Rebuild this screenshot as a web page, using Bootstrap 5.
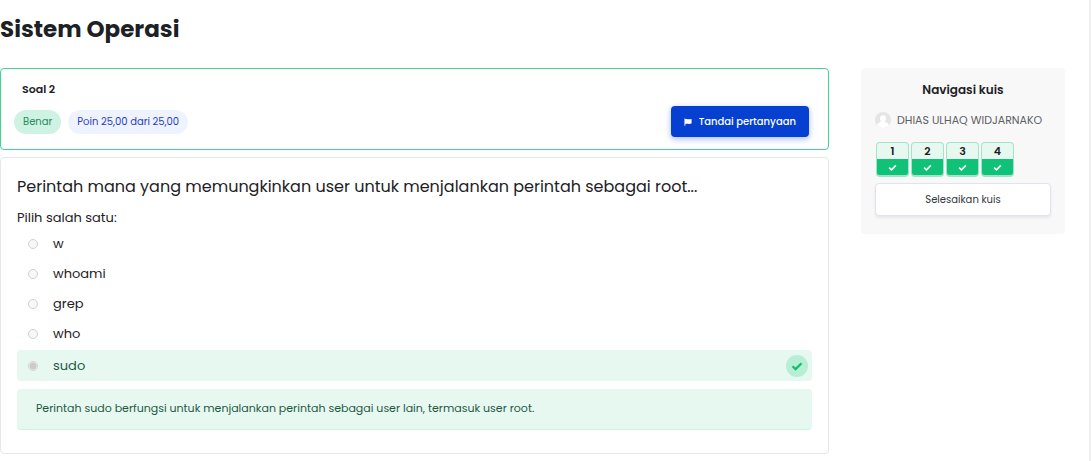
<!DOCTYPE html>
<html lang="id">
<head>
<meta charset="utf-8">
<meta name="viewport" content="width=device-width, initial-scale=1">
<title>Sistem Operasi</title>
<link href="https://cdn.jsdelivr.net/npm/bootstrap@5.3.0/dist/css/bootstrap.min.css" rel="stylesheet">
<style>
  body { font-family: Poppins, Inter, "Open Sans", sans-serif; font-size: 13px; line-height: 20px; color: #1d2125; }
  .page-wrap { min-height: 100vh; padding-right: 24px; border-right: 2px solid #f0f0f0; }
  .page-title { font-size: 23px; line-height: 30px; font-weight: 700; padding: 14px 0 24px; }
  .quiz-side { flex: 0 0 204px; background: #f8f8f8; border-radius: 4px; padding: 12px 14px 18px; }
  .info-box { border: 1px solid #3fd195; border-radius: 4px; padding: 10px 19px 12px 13px; min-height: 82px; }
  .info-box h2 { font-size: 11px; line-height: 20px; font-weight: 600; padding-left: 8px; }
  .pill-row { margin-top: 7px; }
  .pill-set { gap: 7px; }
  .pill { font-size: 10px; line-height: 24px; padding: 0 9px; border-radius: 12px; }
  .pill-ok { background: #cff3e3; color: #2b8a5c; }
  .pill-points { background: #eff3ff; color: #1f3fc4; }
  .btn-flag { gap: 7px; background: #0540d0; color: #fff; font-size: 10px; line-height: 15px; font-weight: 500; padding: 8px 13px; border-radius: 4px; box-shadow: 0 2px 6px rgba(5, 64, 208, .35); }
  .btn-flag:hover { background: #0436b0; color: #fff; }
  .question-box { border: 1px solid #e7e7e7; border-radius: 4px; padding: 16px 16px 23px; margin-top: 7px; }
  .question-text { font-size: 16px; line-height: 26px; }
  .prompt-line { margin: 8px 0 1px; }
  .choice { min-height: 30px; padding: 0 4px 0 11px; border-radius: 4px; }
  .choice input { appearance: none; width: 10px; height: 10px; margin: 0 15px 0 0; border: 1px solid #d2d2d2; border-radius: 50%; background: #f7f7f7; }
  .choice input:checked { background: radial-gradient(circle, #cacaca 0 3px, #f3f3f3 4px); }
  .choice-ok { background: #e7f8f0; color: #1d5944; min-height: 31px; margin-top: 1px; }
  .check-dot { width: 22px; height: 22px; border-radius: 50%; background: #b7eed5; color: #10bf74; }
  .feedback-box { background: #e7f8f0; color: #1d5944; border-bottom: 1px solid #d3f1e3; border-radius: 4px; font-size: 11px; line-height: 20px; padding: 9px 19px 11px; margin-top: 8px; }
  .side-title { font-size: 12px; line-height: 20px; font-weight: 600; }
  .user-row { gap: 6px; margin: 10px 0 12px; }
  .user-name { font-size: 11px; line-height: 20px; color: #5c6064; }
  .q-list { gap: 2px; padding-left: 1px; margin-bottom: 6px; }
  .q-link { width: 33px; border: 1px solid #9fe5c8; border-bottom-width: 2px; border-radius: 4px; background: #e7f8f0; color: #1d2125; font-size: 11px; line-height: 16px; font-weight: 600; }
  .q-state { height: 16px; background: #10c278; color: #fff; border-radius: 0 0 2px 2px; }
  .btn-finish { background: #fff; border: 1px solid #e3e3f0; border-radius: 4px; font-size: 10px; line-height: 15px; padding: 8px; color: #34383c; box-shadow: 0 2px 3px rgba(40, 40, 80, .08); }
  .btn-finish:hover { background: #f4f5fb; }
</style>
</head>
<body>
<svg class="d-none" aria-hidden="true">
  <symbol id="tick" viewBox="0 0 12 12"><path d="M1.5 6.2 4.6 9.1 10.5 3.2" fill="none" stroke="currentColor" stroke-width="2.2"/></symbol>
</svg>
<div class="page-wrap">
  <h1 class="page-title m-0">Sistem Operasi</h1>
  <div class="d-flex align-items-start">
    <main class="flex-grow-1 me-4 pe-2">
      <section class="info-box">
        <h2 class="m-0">Soal 2</h2>
        <div class="pill-row d-flex align-items-center justify-content-between">
          <div class="pill-set d-flex">
            <span class="pill pill-ok">Benar</span>
            <span class="pill pill-points">Poin 25,00 dari 25,00</span>
          </div>
          <button type="button" class="btn btn-flag border-0 d-flex align-items-center">
            <svg width="8" height="8" viewBox="0 0 9 9" fill="currentColor" aria-hidden="true"><path d="M.5 .5h1v.8C3.500 .5 5 2 8.500 1v5.200C5.500 7.400 4 6 1.500 6.700V8.800h-1z"/></svg>
            Tandai pertanyaan
          </button>
        </div>
      </section>
      <section class="question-box">
        <p class="question-text m-0">Perintah mana yang memungkinkan user untuk menjalankan perintah sebagai root...</p>
        <p class="prompt-line">Pilih salah satu:</p>
        <div class="choice d-flex align-items-center"><input type="radio" name="jawaban" id="a1" disabled><label for="a1">w</label></div>
        <div class="choice d-flex align-items-center"><input type="radio" name="jawaban" id="a2" disabled><label for="a2">whoami</label></div>
        <div class="choice d-flex align-items-center"><input type="radio" name="jawaban" id="a3" disabled><label for="a3">grep</label></div>
        <div class="choice d-flex align-items-center"><input type="radio" name="jawaban" id="a4" disabled><label for="a4">who</label></div>
        <div class="choice choice-ok d-flex align-items-center"><input type="radio" name="jawaban" id="a5" checked disabled><label for="a5">sudo</label>
          <span class="check-dot ms-auto d-flex align-items-center justify-content-center"><svg width="12" height="12" role="img" aria-label="Benar"><use href="#tick"/></svg></span>
        </div>
        <div class="feedback-box">Perintah sudo berfungsi untuk menjalankan perintah sebagai user lain, termasuk user root.</div>
      </section>
    </main>
    <aside class="quiz-side">
      <h2 class="side-title text-center m-0">Navigasi kuis</h2>
      <div class="user-row d-flex align-items-center">
        <svg width="16" height="16" viewBox="0 0 16 16" aria-hidden="true"><circle cx="8" cy="8" r="8" fill="#e5e5e5"/><path d="M8 3.200a3 3 0 0 1 3 3c0 1.300-.6 2.200-1.200 2.900.2 1.300 3.800 1.300 4 4.400A8 8 0 0 1 8 16a8 8 0 0 1-5.800-2.500c.2-3.100 3.800-3.100 4-4.400C5.600 8.400 5 7.500 5 6.200a3 3 0 0 1 3-3z" fill="#fff"/></svg>
        <span class="user-name text-nowrap">DHIAS ULHAQ WIDJARNAKO</span>
      </div>
      <nav class="d-flex q-list" aria-label="Navigasi kuis">
        <a href="#" class="q-link text-center text-decoration-none">1<span class="q-state d-flex align-items-center justify-content-center"><svg width="9" height="9"><use href="#tick"/></svg></span></a>
        <a href="#" class="q-link text-center text-decoration-none">2<span class="q-state d-flex align-items-center justify-content-center"><svg width="9" height="9"><use href="#tick"/></svg></span></a>
        <a href="#" class="q-link text-center text-decoration-none">3<span class="q-state d-flex align-items-center justify-content-center"><svg width="9" height="9"><use href="#tick"/></svg></span></a>
        <a href="#" class="q-link text-center text-decoration-none">4<span class="q-state d-flex align-items-center justify-content-center"><svg width="9" height="9"><use href="#tick"/></svg></span></a>
      </nav>
      <button type="button" class="btn btn-finish w-100">Selesaikan kuis</button>
    </aside>
  </div>
</div>
<script src="https://cdn.jsdelivr.net/npm/bootstrap@5.3.0/dist/js/bootstrap.bundle.min.js"></script>
</body>
</html>
